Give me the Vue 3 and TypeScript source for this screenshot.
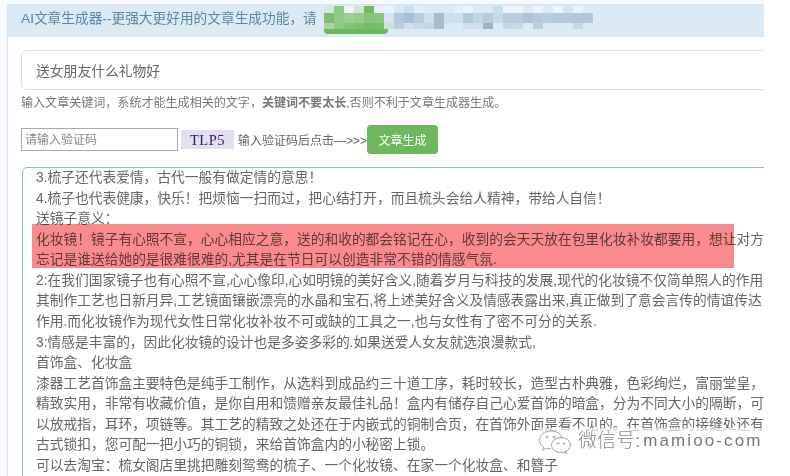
<script setup lang="ts">
const top = ['#d6e8da','#8cc98a','#ecf4f9','#cfe6d6','#6fbb63','#e4eff6','#e9f2f8','#d8e8f3','#c9e0f0','#e2eef6','#dbeaf5','#dbeaf5','#dbeaf5','#e4eff6','#eef5fa','#dbeaf5','#dbeaf5','#c9e0ec','#eef5fa','#eef5fa','#dbeaf5','#ecf3f9','#dbeaf5','#eef5fa','#d5e6f1','#eaf3f9','#dbeaf5']
const mid = ['#7cbe6f','#92ca85','#9ecf92','#96cb88','#87c47a','#8ac57c','#d6e4ef','#b3c8dd','#a9bfd6','#b9ccdb','#d0dfe9','#a8bccc','#cde0ef','#cfe0ec','#b4c9d8','#c3d6e3','#b9ccdb','#c8dae7','#bacddd','#b9ccdc','#b0c4d6','#b8cbdc','#b9cddd','#b5c9da','#b6c9d8','#b3c7d9','#b3c7d9']
const low = ['#a9d49e','#8fc784','#84c277','#7dbe70','#76bb69','#7abd6d','#cbe2d9','#b9cfe1','#d2e1ec','#c6d9e4','#c5d7e3','#a9bccb','#dbe9f4','#dbeaf5','#cfe0eb','#cfe0eb','#9db3c9','#dbeaf5','#c5d8e4','#cad9e4','#dbeaf5','#bccfdf','#dbeaf5','#dbeaf5','#dbeaf5','#c6dae5','#dbeaf5']
const cells = [...top, ...mid, ...low]

const lines = [
  '3.梳子还代表爱情，古代一般有做定情的意思！',
  '4.梳子也代表健康，快乐！把烦恼一扫而过，把心结打开，而且梳头会给人精神，带给人自信！',
  '送镜子意义：',
  '化妆镜！镜子有心照不宣，心心相应之意，送的和收的都会铭记在心，收到的会天天放在包里化妆补妆都要用，想让对方',
  '忘记是谁送给她的是很难很难的,尤其是在节日可以创造非常不错的情感气氛.',
  '2:在我们国家镜子也有心照不宣,心心像印,心如明镜的美好含义,随着岁月与科技的发展,现代的化妆镜不仅简单照人的作用',
  '其制作工艺也日新月异,工艺镜面镶嵌漂亮的水晶和宝石,将上述美好含义及情感表露出来,真正做到了意会言传的情谊传达',
  '作用.而化妆镜作为现代女性日常化妆补妆不可或缺的工具之一,也与女性有了密不可分的关系.',
  '3:情感是丰富的，因此化妆镜的设计也是多姿多彩的.如果送爱人女友就选浪漫款式,',
  '首饰盒、化妆盒',
  '漆器工艺首饰盒主要特色是纯手工制作，从选料到成品约三十道工序，耗时较长，造型古朴典雅，色彩绚烂，富丽堂皇，',
  '精致实用，非常有收藏价值，是你自用和馈赠亲友最佳礼品！盒内有储存自己心爱首饰的暗盒，分为不同大小的隔断，可',
  '以放戒指，耳环，项链等。其工艺的精致之处还在于内嵌式的铜制合页，在首饰外面是看不见的。在首饰盒的接缝处还有',
  '古式锁扣，您可配一把小巧的铜锁，来给首饰盒内的小秘密上锁。',
  '可以去淘宝：梳女阁店里挑把雕刻鸳鸯的梳子、一个化妆镜、在家一个化妆盒、和簪子',
]
</script>

<template>
  <div class="page">
    <section class="panel">
      <header class="head">
        <span class="title">AI文章生成器--更强大更好用的文章生成功能，请</span>
        <div class="mosaic">
          <div class="grid">
            <i v-for="(c, n) in cells" :key="n" :style="{ background: c }"></i>
          </div>
          <div class="bar"></div>
        </div>
      </header>
      <div class="body">
        <input class="keyword" value="送女朋友什么礼物好" />
        <p class="hint">输入文章关键词，系统才能生成相关的文字，<b>关键词不要太长</b>,否则不利于文章生成器生成。</p>
        <div class="row">
          <input class="code" placeholder="请输入验证码" />
          <span class="captcha">TLP5</span>
          <span class="tip">输入验证码后点击—&gt;&gt;&gt;</span>
          <button class="go">文章生成</button>
        </div>
        <div class="result">
          <div v-for="(l, n) in lines" :key="n" class="line">{{ l }}</div>
          <div class="mark"></div>
        </div>
      </div>
    </section>
    <div class="wm">
      <svg class="wx" width="34" height="25" viewBox="0 0 34 25" fill="none" stroke="#a5a5a5" stroke-width="1">
        <path d="M13 2C6.5 2 1.5 6 1.5 11c0 2.8 1.6 5.2 4 6.8L4.6 21l3.6-1.9c1.5.5 3 .7 4.8.7" />
        <path d="M13 2c5.600 0 10.200 3 11.200 7.300" />
        <ellipse cx="23" cy="16" rx="9.500" ry="7.500" />
        <path d="M28 22l1 2.500-3.200-1.500" />
        <circle cx="9" cy="8" r="1" />
        <circle cx="16" cy="8" r="1" />
        <circle cx="20" cy="14.500" r=".8" />
        <circle cx="26" cy="14.500" r=".8" />
      </svg>
      <span class="wt">微信号:</span>
      <span class="wl">mamioo-com</span>
    </div>
  </div>
</template>

<style scoped>
.page {
  position: relative;
  width: 764px;
  height: 476px;
  overflow: hidden;
  background: #f6f9fd;
  padding: 4px 0 0 7px;
  box-sizing: border-box;
  font-family: "Liberation Sans", "Noto Sans CJK SC", sans-serif;
  color: #666;
  filter: blur(0.4px);
}
.panel {
  height: 100%;
  border: 1px solid #d3e5f1;
  border-right: 0;
  border-bottom: 0;
  border-radius: 3px 0 0 0;
  background: #fff;
  overflow: hidden;
  box-sizing: border-box;
}
.head {
  display: flex;
  height: 32px;
  background: #dbeaf5;
}
.title {
  margin: 0 0 0 13px;
  font-size: 13.7px;
  line-height: 28px;
  color: #5a86a8;
  white-space: nowrap;
  width: 303px;
  flex: none;
}
.mosaic {
  flex: none;
  width: 269px;
  padding-top: 1px;
}
.grid {
  display: grid;
  grid-template-columns: repeat(27, 1fr);
  grid-template-rows: 7px 10px 6px;
}
.bar {
  width: 64px;
  height: 5px;
  background: #6cb860;
  border-radius: 0 0 4px 4px;
}
.body {
  padding: 13px 0 0 13px;
}
.keyword {
  display: block;
  width: 800px;
  height: 40px;
  box-sizing: border-box;
  border: 1px solid #dcdcdc;
  border-radius: 6px;
  padding: 0 14px;
  font: inherit;
  font-size: 13.8px;
  color: #666;
  outline: none;
}
.hint {
  margin: 3px 0 0;
  font-size: 12.05px;
  line-height: 20px;
  color: #777;
  white-space: nowrap;
}
.row {
  display: flex;
  align-items: center;
  height: 29px;
  margin-top: 12px;
}
.code {
  width: 157px;
  height: 23px;
  box-sizing: border-box;
  border: 1px solid #aaa;
  padding: 0 3px;
  font: inherit;
  font-size: 12px;
  outline: none;
}
.code::placeholder {
  color: #888;
}
.captcha {
  width: 53px;
  height: 19px;
  margin-left: 3px;
  background: #e3dff0;
  color: #2c1a5a;
  font-family: "Liberation Serif", serif;
  font-size: 14.5px;
  line-height: 20px;
  letter-spacing: 0.5px;
  text-align: center;
}
.tip {
  margin-left: 4px;
  font-size: 12px;
  color: #666;
  white-space: nowrap;
  width: 129px;
  flex: none;
}
.go {
  width: 71px;
  height: 29px;
  border: 0;
  border-radius: 4px;
  background: #6eb75d;
  color: #fff;
  font: inherit;
  font-size: 12px;
  padding: 0;
}
.result {
  position: relative;
  width: 800px;
  height: 320px;
  margin: 13px 0 0 1px;
  box-sizing: border-box;
  border: 1px solid #8db8e6;
  border-radius: 5px;
  padding-left: 13px;
  font-size: 13.74px;
  line-height: 20.57px;
  color: #666;
}
.line {
  white-space: nowrap;
}
.mark {
  position: absolute;
  left: 9px;
  top: 56px;
  width: 702px;
  height: 44px;
  background: #f98a8e;
  mix-blend-mode: multiply;
}
.wm {
  position: absolute;
  left: 538px;
  top: 428px;
  width: 226px;
  height: 26px;
  display: flex;
  align-items: center;
  background: rgba(255, 255, 255, 0.65);
}
.wx {
  flex: none;
}
.wt {
  margin-left: 6px;
  font-size: 19px;
  font-weight: 300;
  color: #8a8a8a;
  white-space: nowrap;
  line-height: 26px;
  flex: none;
}
.wl {
  margin-left: 3px;
  font-size: 17px;
  letter-spacing: 2.1px;
  color: #777;
  white-space: nowrap;
  flex: none;
}
</style>

<style>
html, body {
  background: #fff;
}
</style>
